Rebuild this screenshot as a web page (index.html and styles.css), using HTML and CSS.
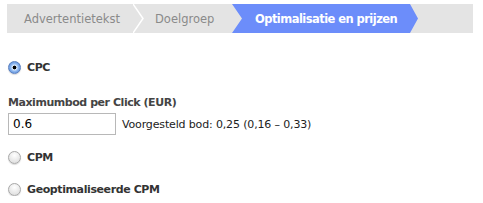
FILE: index.html
```html
<!DOCTYPE html>
<html lang="nl">
<head>
  <meta charset="UTF-8" />
  <title>Optimalisatie en prijzen</title>
  <link rel="stylesheet" href="styles.css">
</head>
<body>
  <div class="steps">
    <div class="step step-first">Advertentietekst</div>
    <svg class="step-sep" width="12" height="29" viewBox="0 0 12 29">
      <polyline points="0,0 10,14.5 0,29" fill="none" stroke="#ffffff" stroke-width="1.5" />
    </svg>
    <div class="step step-second">Doelgroep</div>
    <div class="step step-active">Optimalisatie en prijzen</div>
  </div>

  <form class="bidding">
    <label class="option">
      <input type="radio" name="bid" value="cpc" checked>
      <span>CPC</span>
    </label>

    <div class="max-bid">
      <div class="field-label">Maximumbod per Click (EUR)</div>
      <div class="field-row">
        <input type="text" class="bid-input" value="0.6">
        <span class="suggest">Voorgesteld bod: 0,25 (0,16 &ndash; 0,33)</span>
      </div>
    </div>

    <label class="option option-cpm">
      <input type="radio" name="bid" value="cpm">
      <span>CPM</span>
    </label>

    <label class="option option-ocpm">
      <input type="radio" name="bid" value="ocpm">
      <span>Geoptimaliseerde CPM</span>
    </label>
  </form>
</body>
</html>
```

FILE: styles.css
```css
* {
  box-sizing: border-box;
  margin: 0;
  padding: 0;
}

body {
  background: #ffffff;
  font-family: 'DejaVu Sans', Verdana, sans-serif;
  font-size: 11px;
  color: #333333;
}

.steps {
  display: flex;
  align-items: stretch;
  height: 29px;
  margin: 4px 10px 0 7px;
  background-color: #e4e4e4;
}

.step {
  display: flex;
  align-items: center;
  font-size: 11px;
  color: #8a8a8a;
  white-space: nowrap;
}

.step-first {
  width: 126px;
  padding-left: 17px;
  font-size: 11.5px;
}

.step-sep {
  flex: none;
}

.step-second {
  width: 87px;
  padding-left: 10px;
  font-size: 11.5px;
}

.step-active {
  width: 186px;
  padding-left: 23px;
  background-color: #6c8dfa;
  color: white;
  font-weight: bold;
  font-size: 11.5px;
  letter-spacing: -0.55px;
  clip-path: polygon(0 0, calc(100% - 8px) 0, 100% 50%, calc(100% - 8px) 100%, 0 100%, 10px 50%);
}

.bidding {
  padding: 0 8px;
}

.option {
  display: flex;
  align-items: center;
  gap: 6px;
  font-weight: bold;
  letter-spacing: -0.4px;
  color: #333333;
}

.option:first-child {
  margin-top: 28px;
}

.option input {
  appearance: none;
  width: 13px;
  height: 13px;
  border-radius: 50%;
  border: 1px solid #a8a8a8;
  background: radial-gradient(circle at 50% 30%, #ffffff, #d8d8d8);
  box-shadow: 0 1px 1px rgba(0, 0, 0, 0.15);
}

.option input:checked {
  border-color: #5a7fbf;
  background: radial-gradient(circle, #000000 0 1.6px, #d8e8fb 2.2px, #8ab4ee 4px, #5c8ed8 6.5px);
}

.max-bid {
  margin-top: 22px;
}

.field-label {
  font-weight: bold;
  letter-spacing: -0.45px;
  color: #444444;
  margin-bottom: 4px;
}

.field-row {
  display: flex;
  align-items: center;
  gap: 6px;
}

.bid-input {
  width: 108px;
  height: 22px;
  padding: 0 4px;
  border: 1px solid #b8b8b8;
  font-family: inherit;
  font-size: 12px;
  color: #000000;
}

.suggest {
  color: #222222;
  letter-spacing: -0.15px;
}

.option-cpm {
  margin-top: 16px;
}

.option-ocpm {
  margin-top: 19px;
}
```
